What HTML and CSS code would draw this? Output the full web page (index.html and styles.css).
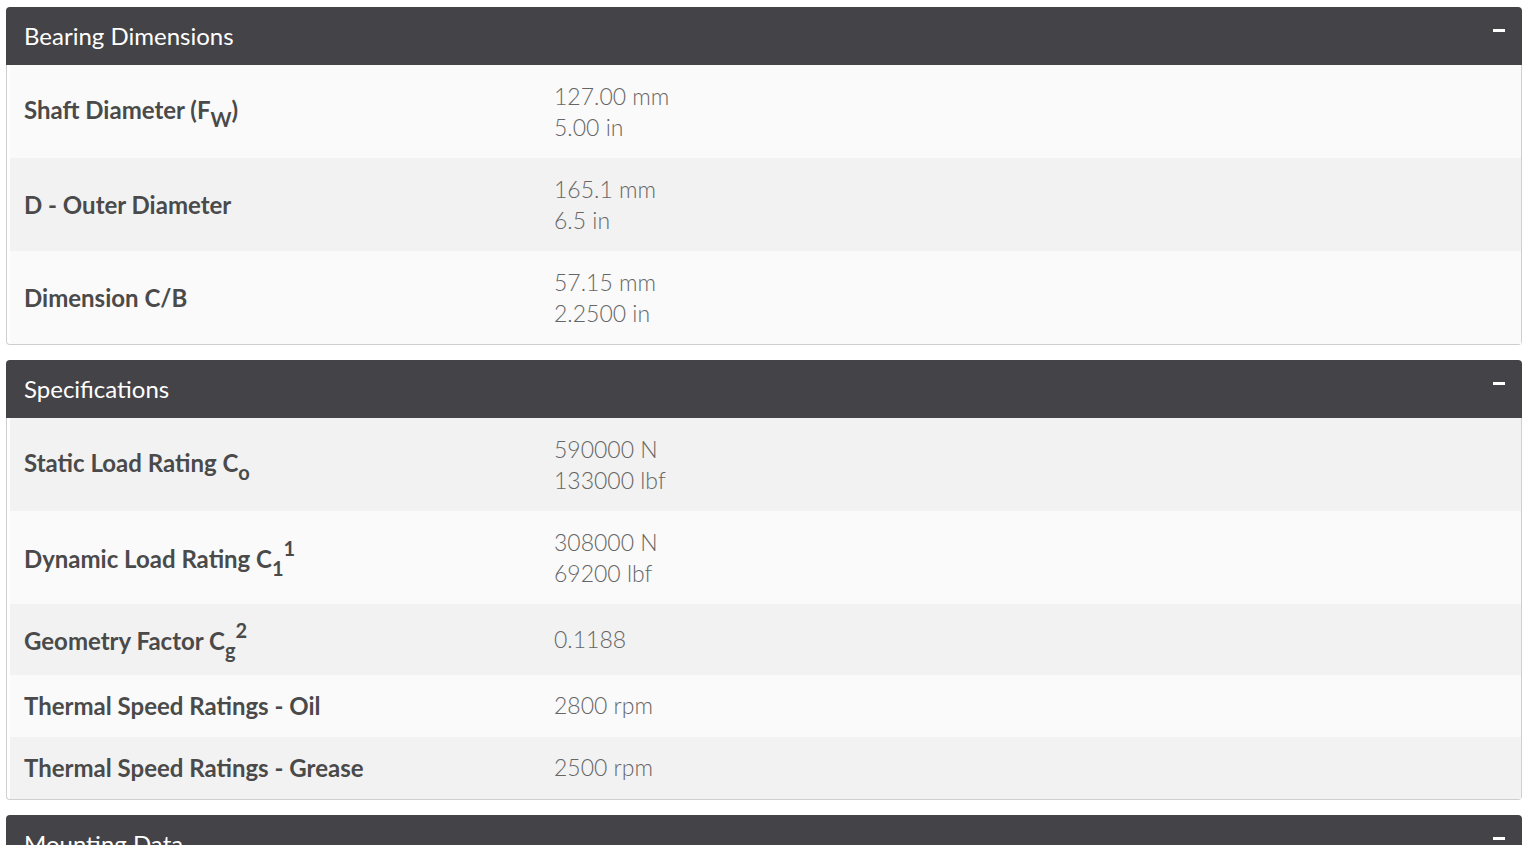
FILE: index.html
```html
<!DOCTYPE html>
<html lang="en">
<head>
<meta charset="utf-8">
<title>Bearing</title>
<link rel="stylesheet" href="styles.css">
</head>
<body>
<section class="panel">
  <header class="panel-head"><h2 class="panel-title">Bearing Dimensions</h2><span class="collapse"></span></header>
  <div class="panel-body">
    <div class="row light"><div class="label">Shaft Diameter (F<sub>W</sub>)</div><div class="value">127.00 mm<br>5.00 in</div></div>
    <div class="row dark"><div class="label">D - Outer Diameter</div><div class="value">165.1 mm<br>6.5 in</div></div>
    <div class="row light"><div class="label">Dimension C/B</div><div class="value">57.15 mm<br>2.2500 in</div></div>
  </div>
</section>
<section class="panel">
  <header class="panel-head"><h2 class="panel-title">Specifications</h2><span class="collapse"></span></header>
  <div class="panel-body">
    <div class="row dark"><div class="label">Static Load Rating C<sub>o</sub></div><div class="value">590000 N<br>133000 lbf</div></div>
    <div class="row light"><div class="label">Dynamic Load Rating C<sub>1</sub><sup>1</sup></div><div class="value">308000 N<br>69200 lbf</div></div>
    <div class="row dark"><div class="label">Geometry Factor C<sub>g</sub><sup>2</sup></div><div class="value">0.1188</div></div>
    <div class="row light"><div class="label">Thermal Speed Ratings - Oil</div><div class="value">2800 rpm</div></div>
    <div class="row dark"><div class="label">Thermal Speed Ratings - Grease</div><div class="value">2500 rpm</div></div>
  </div>
</section>
<section class="panel">
  <header class="panel-head"><h2 class="panel-title">Mounting Data</h2><span class="collapse"></span></header>
  <div class="panel-body">
    <div class="row light"><div class="label">Shaft Diameter</div><div class="value">127.00 mm</div></div>
  </div>
</section>
</body>
</html>
```
FILE: styles.css
```css
html, body {
  margin: 0;
  padding: 0;
  background: #ffffff;
  overflow: hidden;
}
body {
  padding-top: 7px;
  font-family: Lato, "Open Sans", sans-serif;
}
.panel {
  margin: 0 0 15px 6px;
}
.panel-head {
  display: flex;
  align-items: center;
  justify-content: space-between;
  height: 58px;
  padding: 0 17px 0 18px;
  background: #444347;
  border-radius: 4px 4px 0 0;
}
.panel-title {
  margin: 0;
  font-size: 24px;
  font-weight: 400;
  color: #ffffff;
  line-height: 58px;
}
.collapse {
  width: 12px;
  height: 3px;
  background: #ffffff;
  align-self: flex-start;
  margin-top: 22px;
}
.panel-body {
  border: 1px solid #cfcfcf;
  border-top: none;
  border-radius: 0 0 4px 4px;
  padding: 0 0 0 3px;
}
.row {
  display: flex;
  align-items: center;
  padding: 15.5px 0;
}
.row.light { background: #fafafa; }
.row.dark { background: #f2f2f2; }
.label {
  width: 530px;
  padding-left: 14px;
  font-size: 24px;
  font-weight: 700;
  color: #4a4a4a;
}
.label sub, .label sup {
  font-size: 20px;
  line-height: 1;
}
.label sub {
  vertical-align: -0.38em;
}
.label sup {
  vertical-align: 0.6em;
}
.value {
  font-size: 23px;
  font-weight: 300;
  color: #666666;
  line-height: 31px;
}
```
